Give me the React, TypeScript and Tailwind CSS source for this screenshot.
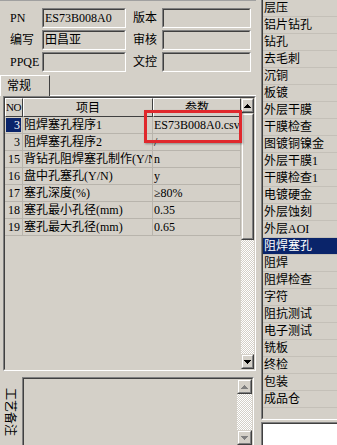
import React from 'react';

type Row = { no: string; item: string; val: string; sel?: boolean };

const rows: Row[] = [
  { no: '3', item: '阻焊塞孔程序1', val: 'ES73B008A0.csv', sel: true },
  { no: '3', item: '阻焊塞孔程序2', val: '/' },
  { no: '15', item: '背钻孔阻焊塞孔制作(Y/N)', val: 'n' },
  { no: '16', item: '盘中孔塞孔(Y/N)', val: 'y' },
  { no: '17', item: '塞孔深度(%)', val: '≥80%' },
  { no: '18', item: '塞孔最小孔径(mm)', val: '0.35' },
  { no: '19', item: '塞孔最大孔径(mm)', val: '0.65' },
];

const steps = [
  '层压', '铝片钻孔', '钻孔', '去毛刺', '沉铜', '板镀', '外层干膜', '干膜检查',
  '图镀铜镍金', '外层干膜1', '干膜检查1', '电镀硬金', '外层蚀刻', '外层AOI',
  '阻焊塞孔', '阻焊', '阻焊检查', '字符', '阻抗测试', '电子测试', '铣板', '终检',
  '包装', '成品仓',
];

function Sunken({
  className = '',
  inner = '',
  children,
}: {
  className?: string;
  inner?: string;
  children?: React.ReactNode;
}) {
  return (
    <div
      className={`border border-t-[#808080] border-l-[#808080] border-r-white border-b-white ${className}`}
    >
      <div
        className={`h-full w-full border border-t-[#404040] border-l-[#404040] border-r-[#d4d0c8] border-b-[#d4d0c8] ${inner}`}
      >
        {children}
      </div>
    </div>
  );
}

function Arrow({ down, color }: { down?: boolean; color: string }) {
  return (
    <svg
      width="7"
      height="4"
      viewBox="0 0 7 4"
      shapeRendering="crispEdges"
      className={down ? 'rotate-180' : ''}
    >
      <path d="M3 0h1v1h1v1h1v1h1v1H0V3h1V2h1V1h1z" fill={color} />
    </svg>
  );
}

function ScrollButton({
  down,
  color,
  className = '',
}: {
  down?: boolean;
  color: string;
  className?: string;
}) {
  return (
    <div
      className={`flex shrink-0 items-center justify-center border border-t-[#d4d0c8] border-l-[#d4d0c8] border-r-[#404040] border-b-[#404040] ${className}`}
    >
      <div className="flex h-full w-full items-center justify-center border border-t-white border-l-white border-r-[#808080] border-b-[#808080]">
        <Arrow down={down} color={color} />
      </div>
    </div>
  );
}

const dither =
  'bg-[repeating-conic-gradient(#ffffff_0%_25%,#d4d0c8_0%_50%)] bg-[length:2px_2px]';

function Field({ label, value }: { label: string; value?: string }) {
  return (
    <>
      <div className="flex items-center pl-[10px]">{label}</div>
      <Sunken className="h-[20px]" inner="flex items-center pl-[1px]">
        {value}
      </Sunken>
    </>
  );
}

export default function App() {
  return (
    <div className="relative flex h-[445px] w-[337px] overflow-hidden bg-[#d4d0c8] font-['Liberation_Serif','Noto_Sans_CJK_SC',serif] text-[12px] leading-none text-black">
      {/* left side */}
      <div className="flex w-[256px] shrink-0 flex-col">
        <div className="grid h-[73px] shrink-0 grid-cols-[42px_84px_36px_89px] content-start gap-y-[2px] border-t border-[#a0a0a0] pt-[7px]">
          <Field label="PN" value="ES73B008A0" />
          <div className="flex items-center pl-[7px]">版本</div>
          <Sunken className="h-[20px]" />
          <Field label="编写" value="田昌亚" />
          <div className="flex items-center pl-[7px]">审核</div>
          <Sunken className="h-[20px]" />
          <Field label="PPQE" />
          <div className="flex items-center pl-[7px]">文控</div>
          <Sunken className="h-[20px]" />
        </div>

        {/* tabs */}
        <div className="flex h-[23px] shrink-0 items-end">
          <div className="flex h-[21px] w-[50px] items-start border-t border-l border-r border-t-white border-l-white border-r-[#404040] pl-[6px] pt-[4px]">
            常规
          </div>
          <div className="flex-1 border-b border-white" />
        </div>

        {/* grid */}
        <Sunken className="ml-[3px] h-[275px] w-[253px] shrink-0" inner="flex">
          <div className="flex w-[236px] flex-col">
            <div className="flex h-[19px] shrink-0">
              <div className="flex w-[18px] items-center border border-t-white border-l-white border-r-[#404040] border-b-[#404040] text-[11px] tracking-[-0.5px]">
                NO
              </div>
              <div className="flex w-[130px] items-center justify-center border border-t-white border-l-white border-r-[#404040] border-b-[#404040]">
                项目
              </div>
              <div className="flex w-[88px] items-center justify-center border border-t-white border-l-white border-r-[#404040] border-b-[#404040]">
                参数
              </div>
            </div>
            {rows.map((r, i) => (
              <div key={i} className="flex h-[17px] shrink-0">
                <div className="flex w-[18px] border-r border-b border-[#b8b4ac] p-px">
                  <div
                    className={`flex flex-1 items-center justify-end pr-[1px] ${
                      r.sel ? 'bg-[#0a246a] text-white' : ''
                    }`}
                  >
                    {r.no}
                  </div>
                </div>
                <div className="flex w-[130px] items-center overflow-hidden whitespace-nowrap border-r border-b border-[#b8b4ac] pl-[1px]">
                  {r.item}
                </div>
                <div className="flex w-[88px] items-center overflow-hidden whitespace-nowrap border-r border-b border-[#b8b4ac] pl-[1px]">
                  {r.val}
                </div>
              </div>
            ))}
          </div>
          <div className="flex w-[13px] flex-col">
            <ScrollButton color="#000000" className="h-[15px]" />
            <div className="h-[127px] shrink-0 border border-t-[#d4d0c8] border-l-[#d4d0c8] border-r-[#404040] border-b-[#404040]">
              <div className="h-full border border-t-white border-l-white border-r-[#808080] border-b-[#808080]" />
            </div>
            <div className={`flex-1 ${dither}`} />
            <ScrollButton down color="#000000" className="h-[15px]" />
          </div>
        </Sunken>

        {/* bottom memo */}
        <div className="flex flex-1">
          <div className="w-[22px] shrink-0 pl-[5px] pt-[17px]">
            <div className="font-['Noto_Sans_CJK_SC',sans-serif] leading-[12px] [writing-mode:vertical-rl] [text-orientation:sideways]">
              工艺备注
            </div>
          </div>
          <Sunken className="mr-[2px] mt-[6px] h-[70px] flex-1" inner="flex justify-end">
            <div className="flex w-[15px] flex-col">
              <ScrollButton color="#808080" className="h-[15px]" />
              <div className={`flex-1 ${dither}`} />
              <ScrollButton down color="#808080" className="h-[15px]" />
            </div>
          </Sunken>
        </div>
      </div>

      {/* right side process list */}
      <div className="-mt-[2px] flex w-[95px] shrink-0 flex-col pl-[5px]">
        <Sunken className="h-[422px] shrink-0" inner="flex flex-col">
          {steps.map((s) => (
            <div
              key={s}
              className={`flex h-[17px] shrink-0 items-center whitespace-nowrap border-b border-[#c4c0b8] pl-[1px] ${
                s === '阻焊塞孔' ? 'bg-[#0a246a] text-white' : ''
              }`}
            >
              {s}
            </div>
          ))}
        </Sunken>
        <Sunken className="mt-[2px] h-[40px] shrink-0" inner="bg-white" />
      </div>

      {/* annotation */}
      <div className="absolute left-[144px] top-[110px] h-[33px] w-[98px] border-[3px] border-[#e0282c] shadow-[1px_1px_2px_rgba(0,0,0,0.35)]" />
    </div>
  );
}
